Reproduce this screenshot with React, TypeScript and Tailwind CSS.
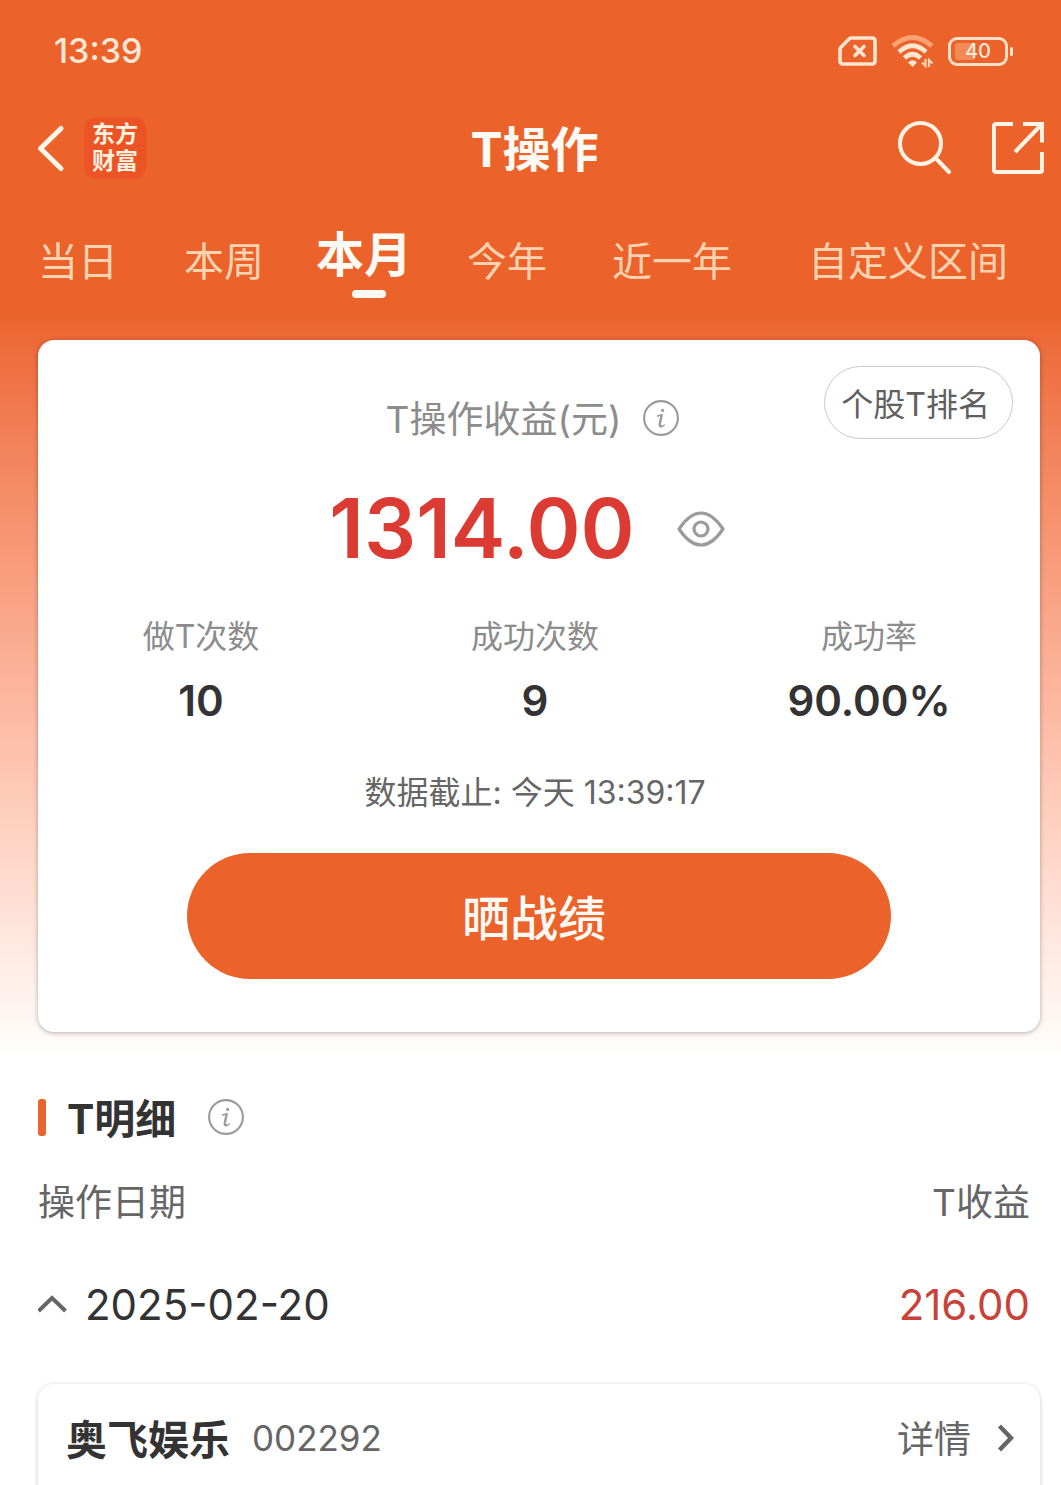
import React from 'react';
import clsx from 'clsx';

const periods = ['当日', '本周', '本月', '今年', '近一年', '自定义区间'];

const stats = [
  { label: '做T次数', value: '10' },
  { label: '成功次数', value: '9' },
  { label: '成功率', value: '90.00%' },
];

const InfoIcon = () => (
  <svg viewBox="0 0 36 36" className="w-9 h-9" fill="none" stroke="#9b9b9b" strokeLinecap="round" strokeLinejoin="round">
    <circle cx="18" cy="18" r="16.9" strokeWidth="2.1" />
    <circle cx="19.6" cy="10.4" r="1.6" fill="#9b9b9b" stroke="none" />
    <path d="M14.6 16 L19 14.8" strokeWidth="1.4" />
    <path d="M18.6 15.4 L16.8 24 Q16.4 26.4 18.2 26.2" strokeWidth="2.4" />
    <path d="M17.8 26.6 Q19.8 26.6 21.4 25" strokeWidth="1.4" />
  </svg>
);

const StatusBar = () => (
  <div className="flex items-center justify-between pt-[27px] pl-[54px] pr-12">
    <span className="text-[34px] leading-[48px] font-medium text-[#ffe9d6]">13:39</span>
    <div className="flex items-center gap-[14px]">
      {/* SIM card missing */}
      <svg viewBox="0 0 40 32" className="w-10 h-8" fill="none" stroke="#ffe6d0" strokeWidth="3.6" strokeLinejoin="round" strokeLinecap="round">
        <path d="M13 3 H34 Q37 3 37 6 V26 Q37 29 34 29 H5 Q2 29 2 26 V14.5 Q2 13.2 3 12.2 L11 4 Q12 3 13 3 Z" />
        <path d="M17 11.5 L26 20.5 M26 11.5 L17 20.5" />
      </svg>
      {/* Wifi */}
      <svg viewBox="0 0 42 34" className="w-[42px] h-[34px]" fill="none" strokeWidth="4.6">
        <path d="M1 12 Q20.5 -5 40 12" stroke="#f7a374" />
        <path d="M7 18 Q20.5 5.5 34 18" stroke="#ffe6d0" />
        <path d="M12.5 24 Q20.5 16.5 28.5 24" stroke="#ffe6d0" />
        <path d="M16 28.5 Q20.5 24 25 28.5 L20.5 33 Z" fill="#ffe6d0" />
        <path d="M33.5 25 V32 L30 28.5 M37 33 V26 L40.5 29.5" stroke="#ffd2b0" strokeWidth="2.2" />
      </svg>
      {/* Battery */}
      <div className="flex items-center gap-0.5">
        <div className="relative flex items-center justify-center w-[60px] h-[29px] rounded-[9px] border-3 border-[#ffe0c6]">
          <span className="absolute left-1 inset-y-[3px] w-5 rounded-xs bg-[#f28a58]" />
          <span className="relative text-xl leading-none font-medium text-[#ffe9d6]">40</span>
        </div>
        <span className="w-[3px] h-[9px] rounded-full bg-[#ffe0c6]" />
      </div>
    </div>
  </div>
);

const NavBar = () => (
  <header className="grid grid-cols-[1fr_auto_1fr] items-center mt-[41px] pl-6 pr-4">
    <div className="flex items-center gap-2">
      <button aria-label="返回">
        <svg viewBox="0 0 52 64" className="w-[52px] h-16" fill="none" stroke="#fff6ea" strokeWidth="5" strokeLinecap="round" strokeLinejoin="round">
          <path d="M37 12.5 L16.5 32.5 L37 52.5" />
        </svg>
      </button>
      <div className="flex flex-col items-center justify-center w-[62px] h-[62px] rounded-xl bg-[#ec5426] text-[23px] leading-[27px] font-bold text-[#fff0de]">
        <span>东方</span>
        <span>财富</span>
      </div>
    </div>
    <h1 className="pt-1 text-5xl leading-[60px] font-bold text-[#fffaf3]">T操作</h1>
    <div className="flex items-center justify-end gap-10">
      <button aria-label="搜索">
        <svg viewBox="0 0 56 56" className="w-14 h-14" fill="none" stroke="#fff3e4" strokeWidth="4" strokeLinecap="round">
          <circle cx="25.5" cy="23.5" r="20.5" />
          <path d="M40.5 38 L54 52" />
        </svg>
      </button>
      <button aria-label="分享">
        <svg viewBox="0 0 54 54" className="w-[54px] h-[54px]" fill="none" stroke="#fff3e4" strokeWidth="4" strokeLinejoin="round">
          <path d="M22 3 H5 Q3 3 3 5 V49 Q3 51 5 51 H49 Q51 51 51 49 V31" />
          <path d="M32 3 H51 V21.5 M50 4 L24 31" strokeLinejoin="miter" />
        </svg>
      </button>
    </div>
  </header>
);

const PeriodTabs = () => (
  <nav className="grid grid-cols-[156fr_136fr_144fr_142fr_188fr_284fr] mt-[44px] pr-[11px]">
    {periods.map((p) => {
      const active = p === '本月';
      return (
        <button key={p} className="flex flex-col items-center h-[74px]">
          <span
            className={clsx(
              'whitespace-nowrap',
              active ? 'text-5xl leading-[62px] font-bold text-[#fffaf3]' : 'text-[40px] leading-[76px] text-[#ffd2b0]'
            )}
          >
            {p}
          </span>
          {active && <span className="mt-1 ml-[10px] w-[34px] h-2 rounded-full bg-[#fffaf3]" />}
        </button>
      );
    })}
  </nav>
);

const SummaryCard = () => (
  <section className="mt-[42px] ml-[38px] mr-[21px] pb-[53px] rounded-2xl bg-white shadow-[0_1px_5px_rgba(0,0,0,0.3)]">
    <div className="grid grid-cols-[1fr_auto_1fr] items-start pt-[26px] pl-[14px] pr-[27px]">
      <div className="col-start-2 flex items-center gap-[22px] mt-[26px] text-[37px] leading-[48px] text-[#8c8c8c]">
        <h2 className="pt-1">T操作收益(元)</h2>
        <button aria-label="收益说明">
          <InfoIcon />
        </button>
      </div>
      <button className="justify-self-end h-[73px] pt-1 pl-4 pr-[22px] rounded-full border border-[#c9c9c9] text-[32px] text-[#606060]">
        个股T排名
      </button>
    </div>

    <div className="flex items-center justify-center gap-[42px] mt-[43px] pr-6">
      <span className="text-[82px] leading-[84px] font-semibold text-[#db3b32]">1314.00</span>
      <button aria-label="隐藏金额">
        <svg viewBox="0 0 48 36" className="w-12 h-9" fill="none" stroke="#9b9b9b" strokeWidth="3.2" strokeLinejoin="round">
          <path d="M2 18 C8 9 15 2 24 2 C33 2 40 9 46 18 C40 27 33 34 24 34 C15 34 8 27 2 18 Z" />
          <circle cx="24" cy="18" r="7" />
        </svg>
      </button>
    </div>

    <dl className="grid grid-cols-3 mt-[46px] -ml-1 mr-1 text-center">
      {stats.map((s) => (
        <div key={s.label}>
          <dt className="text-[32px] leading-[40px] text-[#8c8c8c]">{s.label}</dt>
          <dd className="mt-5 text-[42px] leading-[48px] font-semibold text-[#333333]">{s.value}</dd>
        </div>
      ))}
    </dl>

    <p className="mt-12 pr-2 text-center text-[32px] leading-[40px] text-[#666666]">数据截止: 今天 13:39:17</p>

    <div className="mt-10 px-[149px]">
      <button className="w-full h-[126px] pt-1.5 pr-2.5 rounded-full bg-[#eb622b] text-5xl font-medium text-[#fffaf3]">
        晒战绩
      </button>
    </div>
  </section>
);

const Details = () => (
  <section className="pl-[38px] pr-[21px]">
    <div className="flex items-center mt-[31px] leading-[48px]">
      <span className="w-2 h-[37px] rounded-[3px] bg-[#e8652f]" />
      <h2 className="ml-[21px] pt-1 text-[41px] font-bold text-[#333333]">T明细</h2>
      <button aria-label="明细说明" className="ml-8">
        <InfoIcon />
      </button>
    </div>

    <div className="flex justify-between mt-9 pr-2.5 text-[37px] leading-[48px] text-[#666666]">
      <span>操作日期</span>
      <span>T收益</span>
    </div>

    <button className="flex items-center w-full mt-[54px] pr-2.5 text-[42px] leading-[48px]">
      <svg viewBox="0 0 30 20" className="w-[30px] h-5" fill="none" stroke="#666666" strokeWidth="4">
        <path d="M0.5 16 L14 3 L27.5 16" />
      </svg>
      <span className="ml-[17px] text-[#333333]">2025-02-20</span>
      <span className="ml-auto text-[#c9423a]">216.00</span>
    </button>

    <a
      href="#detail"
      className="flex items-center h-[120px] mt-[55px] pl-7 pr-[25px] pb-3 rounded-2xl bg-white leading-[48px] text-[#666666] shadow-[0_1px_5px_rgba(0,0,0,0.2)]"
    >
      <span className="pt-1 text-[41px] font-bold text-[#333333]">奥飞娱乐</span>
      <span className="ml-[22px] text-[35px]">002292</span>
      <span className="ml-auto pt-1 text-[37px]">详情</span>
      <svg viewBox="0 0 18 28" className="ml-[26px] w-[18px] h-7" fill="none" stroke="#666666" strokeWidth="4.4">
        <path d="M2.5 2 L14 14 L2.5 26" />
      </svg>
    </a>
  </section>
);

export default function App() {
  return (
    <div className="h-screen overflow-hidden bg-white font-['Inter','Noto_Sans_CJK_SC',sans-serif]">
      <div className="pb-[28px] bg-linear-to-b from-[#eb622b] from-29% to-white">
        <StatusBar />
        <NavBar />
        <PeriodTabs />
        <SummaryCard />
      </div>
      <Details />
    </div>
  );
}
